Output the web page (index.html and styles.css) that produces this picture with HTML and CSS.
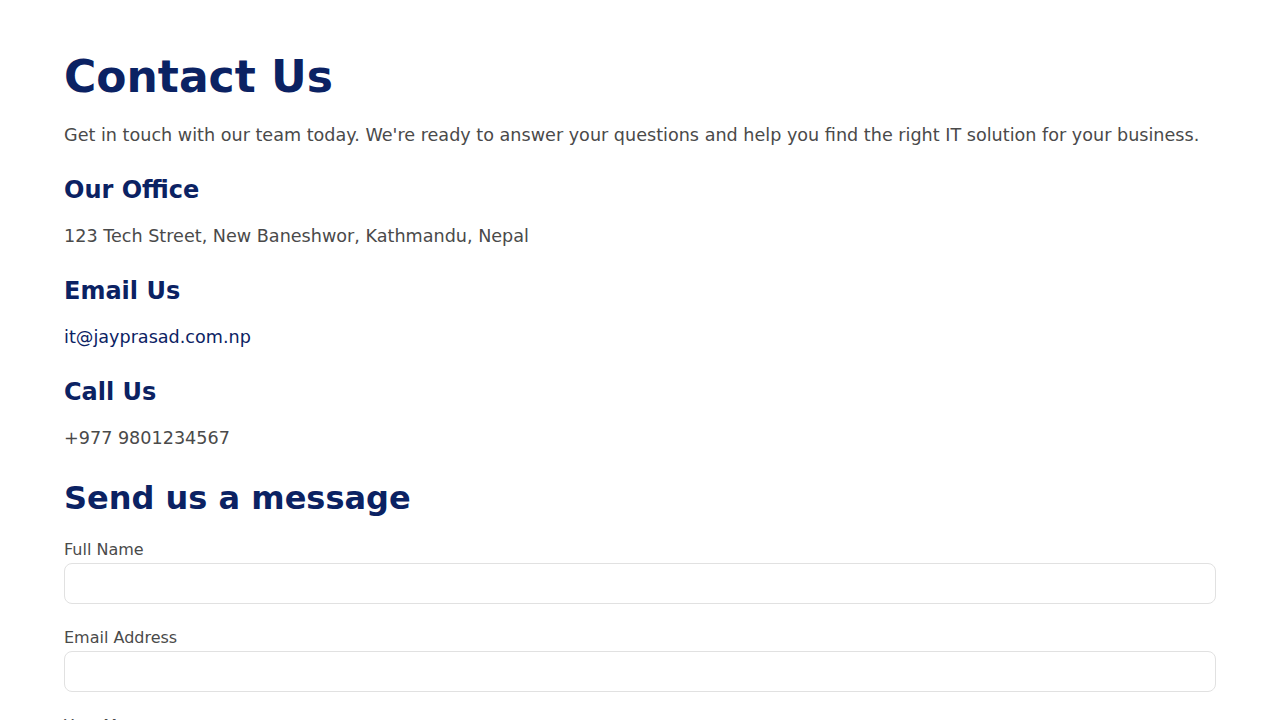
FILE: index.html
```html
<!DOCTYPE html>
<html lang="en">
<head>
<meta charset="utf-8">
<title>Contact Us</title>
<link rel="stylesheet" href="styles.css">
</head>
<body>
<main class="page">
  <h1 class="title">Contact Us</h1>
  <p class="lead">Get in touch with our team today. We're ready to answer your questions and help you find the right IT solution for your business.</p>

  <section class="info">
    <div class="info-item">
      <h3 class="info-title">Our Office</h3>
      <p class="info-text">123 Tech Street, New Baneshwor, Kathmandu, Nepal</p>
    </div>
    <div class="info-item">
      <h3 class="info-title">Email Us</h3>
      <p class="info-text"><a class="info-link" href="#">it@jayprasad.com.np</a></p>
    </div>
    <div class="info-item">
      <h3 class="info-title">Call Us</h3>
      <p class="info-text">+977 9801234567</p>
    </div>
  </section>

  <section class="form-section">
    <h2 class="form-title">Send us a message</h2>
    <form class="form">
      <div class="field">
        <label class="label" for="name">Full Name</label>
        <input class="input" id="name" type="text">
      </div>
      <div class="field">
        <label class="label" for="email">Email Address</label>
        <input class="input" id="email" type="email">
      </div>
      <div class="field">
        <label class="label" for="msg">Your Message</label>
        <textarea class="input textarea" id="msg"></textarea>
      </div>
    </form>
  </section>
</main>
</body>
</html>
```

FILE: styles.css
```css
* { box-sizing: border-box; }
html, body { margin: 0; padding: 0; background: #ffffff; }
body {
  font-family: "DejaVu Sans", Verdana, sans-serif;
  color: #4a4a4a;
}
.page {
  max-width: 1280px;
  padding: 50px 64px 40px;
}
.title {
  margin: 0 0 18px;
  font-size: 44px;
  line-height: 53px;
  font-weight: 700;
  color: #0b2263;
}
.lead {
  margin: 0;
  font-size: 17.6px;
  line-height: 29px;
  color: #4a4a4a;
}
.info {
  margin-top: 26px;
  display: flex;
  flex-direction: column;
  gap: 26px;
}
.info-title {
  margin: 0 0 17px;
  font-size: 24px;
  line-height: 29px;
  font-weight: 700;
  color: #0b2263;
}
.info-text {
  margin: 0;
  font-size: 17.6px;
  line-height: 29px;
  color: #4a4a4a;
}
.info-link {
  color: #0b2263;
  text-decoration: none;
}
.form-section { margin-top: 26px; }
.form-title {
  margin: 0 0 23px;
  font-size: 32px;
  line-height: 38px;
  font-weight: 700;
  color: #0b2263;
}
.form {
  display: flex;
  flex-direction: column;
  gap: 24px;
}
.field {
  display: flex;
  flex-direction: column;
}
.label {
  margin-bottom: 3px;
  font-size: 16px;
  line-height: 20px;
  color: #4a4a4a;
}
.input {
  width: 100%;
  height: 41px;
  border: 1px solid #e1e1e1;
  border-radius: 8px;
  padding: 10px 12px;
  font-family: inherit;
  font-size: 16px;
  background: #ffffff;
}
.textarea {
  height: 140px;
  resize: vertical;
}
```
